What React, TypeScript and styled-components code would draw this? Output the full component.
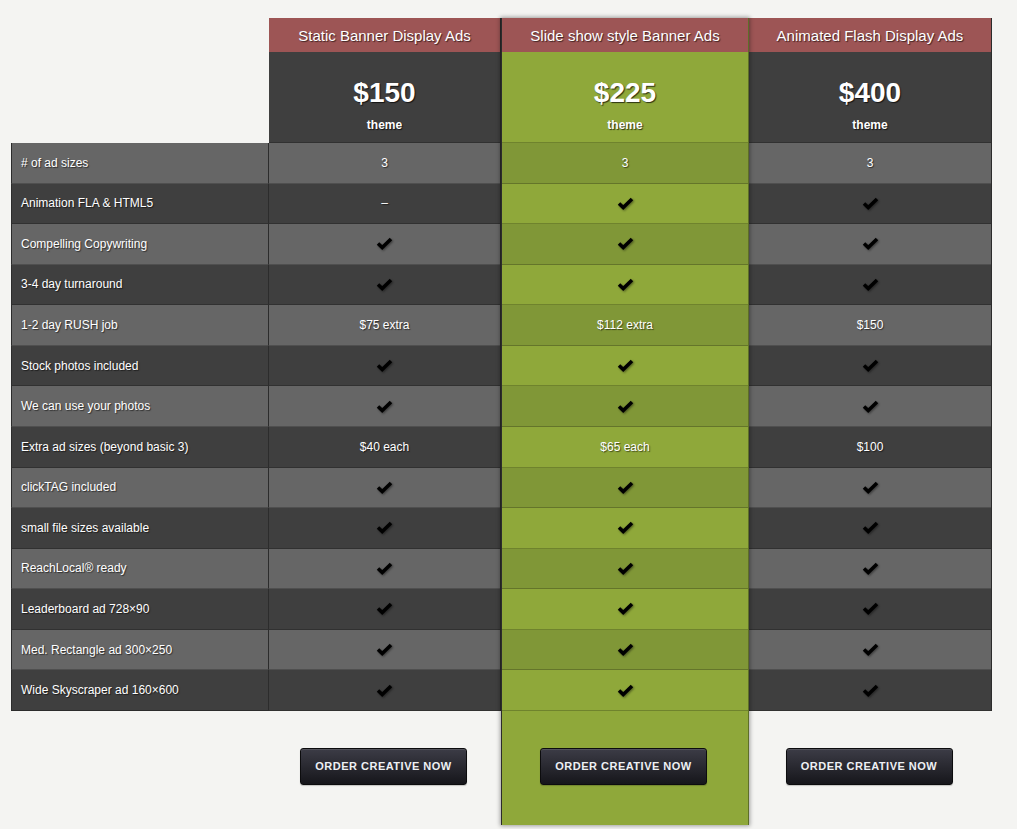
import styled, { createGlobalStyle } from 'styled-components';

type Value = 'check' | 'dash' | string;

interface Plan {
    title: string;
    price: string;
    featured?: boolean;
    values: Value[];
}

const FEATURES = [
    '# of ad sizes',
    'Animation FLA & HTML5',
    'Compelling Copywriting',
    '3-4 day turnaround',
    '1-2 day RUSH job',
    'Stock photos included',
    'We can use your photos',
    'Extra ad sizes (beyond basic 3)',
    'clickTAG included',
    'small file sizes available',
    'ReachLocal® ready',
    'Leaderboard ad 728×90',
    'Med. Rectangle ad 300×250',
    'Wide Skyscraper ad 160×600',
];

const C = 'check';

const PLANS: Plan[] = [
    {
        title: 'Static Banner Display Ads',
        price: '$150',
        values: ['3', 'dash', C, C, '$75 extra', C, C, '$40 each', C, C, C, C, C, C],
    },
    {
        title: 'Slide show style Banner Ads',
        price: '$225',
        featured: true,
        values: ['3', C, C, C, '$112 extra', C, C, '$65 each', C, C, C, C, C, C],
    },
    {
        title: 'Animated Flash Display Ads',
        price: '$400',
        values: ['3', C, C, C, '$150', C, C, '$100', C, C, C, C, C, C],
    },
];

const WIDTHS = [232, 248, 243];

function Check() {
    return (
        <CheckIcon width="17" height="13" viewBox="0 0 17 13">
            <path d="M2 6.5 L6.2 10.5 L15 2" fill="none" stroke="#000" strokeWidth="3.6" strokeLinejoin="miter" />
        </CheckIcon>
    );
}

function renderValue(v: Value) {
    if (v === 'check') return <Check />;
    if (v === 'dash') return <Dash>–</Dash>;
    return v;
}

export default function App() {
    return (
        <>
            <GlobalStyle />
            <Page>
                <Table>
                    <LabelColumn>
                        <LabelSpacer />
                        {FEATURES.map((f, i) => (
                            <LabelCell key={f} light={i % 2 === 0}>
                                {f}
                            </LabelCell>
                        ))}
                    </LabelColumn>
                    {PLANS.map((p, pi) => (
                        <PlanColumn key={p.title} featured={p.featured} style={{ width: WIDTHS[pi] }}>
                            <PlanTitle>{p.title}</PlanTitle>
                            <PriceBox featured={p.featured}>
                                <Price>{p.price}</Price>
                                <Theme>theme</Theme>
                            </PriceBox>
                            {p.values.map((v, i) => (
                                <ValueCell key={i} light={i % 2 === 0} featured={p.featured}>
                                    {renderValue(v)}
                                </ValueCell>
                            ))}
                            <Footer featured={p.featured}>
                                <OrderButton>Order creative now</OrderButton>
                            </Footer>
                        </PlanColumn>
                    ))}
                </Table>
            </Page>
        </>
    );
}

const GlobalStyle = createGlobalStyle`
    html, body {
        margin: 0;
        padding: 0;
        background: #f4f4f2;
    }
    body {
        font-family: 'Liberation Sans', Arial, Helvetica, sans-serif;
    }
`;

const Page = styled.div`
    min-height: 829px;
    padding: 18px 0 0 11px;
    box-sizing: border-box;
`;

const Table = styled.div`
    display: flex;
    align-items: flex-start;
`;

const LabelColumn = styled.div`
    width: 258px;
    display: flex;
    flex-direction: column;
`;

const LabelSpacer = styled.div`
    height: 125px;
    border-bottom: 1px solid #2c2c2c;
    box-sizing: border-box;
    margin-left: 258px;
`;

const cellBase = `
    height: 40.57px;
    box-sizing: border-box;
    display: flex;
    align-items: center;
    font-size: 12px;
    color: #fff;
    text-shadow: 1px 1px 1px rgba(0, 0, 0, 0.55);
    border-bottom: 1px solid rgba(0, 0, 0, 0.22);
`;

const LabelCell = styled.div<{ light: boolean }>`
    ${cellBase}
    padding-left: 9px;
    background: ${({ light }) => (light ? '#666666' : '#3f3f3f')};
    border-left: 1px solid #2c2c2c;
    border-right: 1px solid #2c2c2c;
    &:last-child {
        border-bottom: 1px solid #2c2c2c;
    }
`;

const PlanColumn = styled.div<{ featured?: boolean }>`
    display: flex;
    flex-direction: column;
    position: relative;
    z-index: ${({ featured }) => (featured ? 2 : 1)};
    border-right: ${({ featured }) => (featured ? '1px solid #5e6e28' : '1px solid #2c2c2c')};
    border-left: ${({ featured }) => (featured ? '1px solid #2c2c2c' : 'none')};
    box-shadow: ${({ featured }) => (featured ? '0 0 4px 1px rgba(0, 0, 0, 0.35)' : 'none')};
    box-sizing: border-box;
`;

const PlanTitle = styled.div`
    height: 34px;
    background: #9d5555;
    color: #fff;
    font-size: 15px;
    display: flex;
    align-items: center;
    justify-content: center;
    text-shadow: 1px 1px 1px rgba(0, 0, 0, 0.6);
`;

const PriceBox = styled.div<{ featured?: boolean }>`
    height: 91px;
    background: ${({ featured }) => (featured ? '#8fa83a' : '#3f3f3f')};
    border-bottom: 1px solid rgba(0, 0, 0, 0.22);
    box-sizing: border-box;
    display: flex;
    flex-direction: column;
    align-items: center;
    color: #fff;
    text-shadow: 1px 1px 1px rgba(0, 0, 0, 0.7);
`;

const Price = styled.div`
    font-size: 28px;
    font-weight: bold;
    margin-top: 25px;
    line-height: 32px;
`;

const Theme = styled.div`
    font-size: 12px;
    font-weight: bold;
    margin-top: 9px;
`;

const ValueCell = styled.div<{ light: boolean; featured?: boolean }>`
    ${cellBase}
    justify-content: center;
    background: ${({ light, featured }) =>
        featured ? (light ? '#809737' : '#8fa83a') : light ? '#666666' : '#3f3f3f'};
`;

const Footer = styled.div<{ featured?: boolean }>`
    height: ${({ featured }) => (featured ? '114px' : '111px')};
    background: ${({ featured }) => (featured ? '#8fa83a' : '#f4f4f2')};
    margin-right: ${({ featured }) => (featured ? '0' : '-1px')};
    display: flex;
    justify-content: center;
    align-items: flex-start;
    padding: 37px 3px 0 0;
    box-sizing: border-box;
`;

const OrderButton = styled.button`
    width: 167px;
    height: 37px;
    border: 1px solid #0c0c0e;
    border-radius: 3px;
    background: linear-gradient(#3c3c46, #16161b);
    box-shadow: inset 0 1px 0 rgba(255, 255, 255, 0.12), 0 1px 1px rgba(0, 0, 0, 0.2);
    color: #eef0f4;
    font-family: 'Liberation Sans', Arial, sans-serif;
    font-size: 11px;
    font-weight: bold;
    letter-spacing: 0.5px;
    text-transform: uppercase;
    cursor: pointer;
`;

const CheckIcon = styled.svg`
    display: block;
    filter: drop-shadow(1px 1px 1px rgba(0, 0, 0, 0.45));
`;

const Dash = styled.span`
    font-size: 12px;
`;
